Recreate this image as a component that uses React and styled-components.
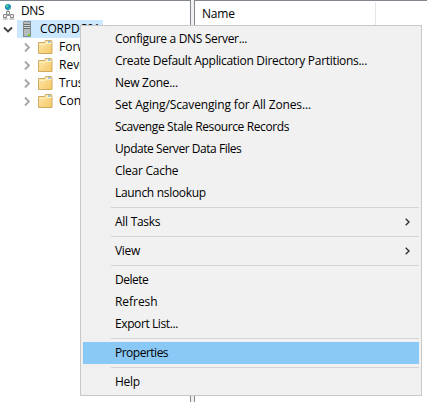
import React from "react";
import styled, { createGlobalStyle } from "styled-components";

const GlobalStyle = createGlobalStyle`
  * { box-sizing: border-box; }
  body {
    margin: 0;
    background: #f0f0f0;
    color: #000;
    font: 12px/18px "Open Sans", "Noto Sans", sans-serif;
    overflow: hidden;
  }
`;

const Window = styled.div`
  position: relative;
  display: flex;
  gap: 3px;
  width: 427px;
  height: 402px;
  overflow: hidden;
`;

const TreePane = styled.div`
  width: 191px;
  padding-top: 1px;
  background: #fff;
  border-top: 1px solid #828790;
  border-right: 1px solid #828790;
`;

const ListPane = styled.div`
  flex: 1;
  background: #fff;
  border-top: 1px solid #828790;
  border-left: 1px solid #828790;
`;

const ColumnHeader = styled.div`
  width: 181px;
  height: 25px;
  margin-top: 1px;
  padding-left: 7px;
  line-height: 24px;
  letter-spacing: -0.2px;
  border-right: 1px solid #e5e5e5;
`;

const TreeRow = styled.div`
  display: flex;
  align-items: center;
  height: 18px;
  padding-left: ${(p) => p.$indent}px;
  svg { display: block; flex: none; }
`;

const TreeLabel = styled.span`
  margin-left: ${(p) => p.$gap}px;
  white-space: nowrap;
  letter-spacing: ${(p) => p.$track || 0}px;
`;

const FolderSlot = styled.span`
  margin-left: 8px;
`;

const Selection = styled.div`
  display: flex;
  align-items: center;
  width: 86px;
  height: 18px;
  margin-left: 4px;
  padding-left: 6px;
  background: #cce8ff;
`;

const Menu = styled.div`
  position: absolute;
  left: 80px;
  top: 25px;
  width: 342px;
  height: 371px;
  padding: 2px;
  background: linear-gradient(to right, #f0f0f0 30px, #f1f1f1 30px);
  border: 1px solid #c8c8c8;
`;

const MenuItem = styled.div`
  display: flex;
  align-items: center;
  justify-content: space-between;
  height: 22px;
  padding: 0 9px 0 32px;
  line-height: 22px;
  white-space: nowrap;
  letter-spacing: ${(p) => p.$track || 0}px;
  background: ${(p) => (p.$active ? "#8ac8f5" : "transparent")};
`;

const Separator = styled.div`
  height: 1px;
  margin: 3px 0 3px 28px;
  background: #d4d4d4;
`;

const NetworkIcon = () => (
  <svg width="13" height="17" viewBox="0 0 13 17">
    <circle cx="6" cy="4" r="3" fill="#1683c6" />
    <path d="M3.500 3l2-2 1.500 2-2 2zM7 5l2-1-1 2.500H6z" fill="#4ccb8a" />
    <path d="M6 7v2" stroke="#888" />
    <path d="M4.500 8.500h3v3h-3z" fill="#eee" stroke="#888" />
    <path d="M1.500 11.500h3v3h-3zM8.500 11.500h3v3h-3z" fill="#eee" stroke="#888" />
    <path d="M1 16h4.500M7.500 16H12M4 12.500h5" stroke="#999" />
  </svg>
);

const ServerIcon = () => (
  <svg width="9" height="16" viewBox="0 0 9 16">
    <path d="M0 1l1-1h7v15l-1 1H0z" fill="#84898c" />
    <path d="M1 1h6v14H1z" fill="#b7bbbe" />
    <path d="M1 3.500h6M1 5.500h6M1 7.500h6" stroke="#666d72" />
    <path d="M1 4.500h6M1 6.500h6" stroke="#d7dadc" />
    <path d="M5 13h2v2H5z" fill="#68dd31" />
  </svg>
);

const FolderIcon = () => (
  <svg width="15" height="14" viewBox="0 0 15 14">
    <defs>
      <linearGradient id="folder" x1="0" y1="0" x2="1" y2="1">
        <stop offset="0" stopColor="#ffe9ae" />
        <stop offset="1" stopColor="#f3c765" />
      </linearGradient>
    </defs>
    <path d="M.5 13.500v-11h6l1-2h6l.5 2v11z" fill="url(#folder)" stroke="#cfaa60" />
    <path d="M8 1.500h5v1H8z" fill="#fff" />
    <path d="M10 2h2.500" stroke="#3d97e5" />
    <path d="M1 4.500h6l1-1h5.500" fill="none" stroke="#fff0c2" />
  </svg>
);

const ExpandedArrow = () => (
  <svg width="10" height="7" viewBox="0 0 10 7">
    <path d="M1 1.500l4 4 4-4" fill="none" stroke="#404040" strokeWidth="1.900" />
  </svg>
);

const CollapsedArrow = () => (
  <svg width="6" height="10" viewBox="0 0 6 10">
    <path d="M1 1.500l4 4-4 4" fill="none" stroke="#a6a6a6" strokeWidth="1.900" />
  </svg>
);

const SubmenuArrow = () => (
  <svg width="5" height="8" viewBox="0 0 5 8">
    <path d="M.7.7L4 4 .7 7.300" fill="none" stroke="#333" strokeWidth="1.400" />
  </svg>
);

const zones = ["Forw", "Reve", "Trus", "Con"];

const items = [
  { label: "Configure a DNS Server...", track: -0.33 },
  { label: "Create Default Application Directory Partitions...", track: -0.31 },
  { label: "New Zone...", track: -0.27 },
  { label: "Set Aging/Scavenging for All Zones...", track: -0.14 },
  { label: "Scavenge Stale Resource Records", track: -0.38 },
  { label: "Update Server Data Files", track: -0.46 },
  { label: "Clear Cache", track: -0.25 },
  { label: "Launch nslookup", track: -0.31 },
  null,
  { label: "All Tasks", track: -0.28, submenu: true },
  null,
  { label: "View", track: -0.3, submenu: true },
  null,
  { label: "Delete", track: -0.5 },
  { label: "Refresh", track: -0.04 },
  { label: "Export List...", track: -0.4 },
  null,
  { label: "Properties", track: -0.5, active: true },
  null,
  { label: "Help", track: -0.3 },
];

export default function App() {
  return (
    <>
      <GlobalStyle />
      <Window>
        <TreePane>
          <TreeRow $indent={2}>
            <NetworkIcon />
            <TreeLabel $gap={6} $track={-0.4}>DNS</TreeLabel>
          </TreeRow>
          <TreeRow $indent={3}>
            <ExpandedArrow />
            <Selection>
              <ServerIcon />
              <TreeLabel $gap={8} $track={-0.15}>CORPDC01</TreeLabel>
            </Selection>
          </TreeRow>
          {zones.map((zone) => (
            <TreeRow key={zone} $indent={24}>
              <CollapsedArrow />
              <FolderSlot><FolderIcon /></FolderSlot>
              <TreeLabel $gap={6}>{zone}</TreeLabel>
            </TreeRow>
          ))}
        </TreePane>
        <ListPane>
          <ColumnHeader>Name</ColumnHeader>
        </ListPane>
        <Menu>
          {items.map((item, i) =>
            item ? (
              <MenuItem key={i} $active={item.active} $track={item.track}>
                <span>{item.label}</span>
                {item.submenu && <SubmenuArrow />}
              </MenuItem>
            ) : (
              <Separator key={i} />
            )
          )}
        </Menu>
      </Window>
    </>
  );
}
